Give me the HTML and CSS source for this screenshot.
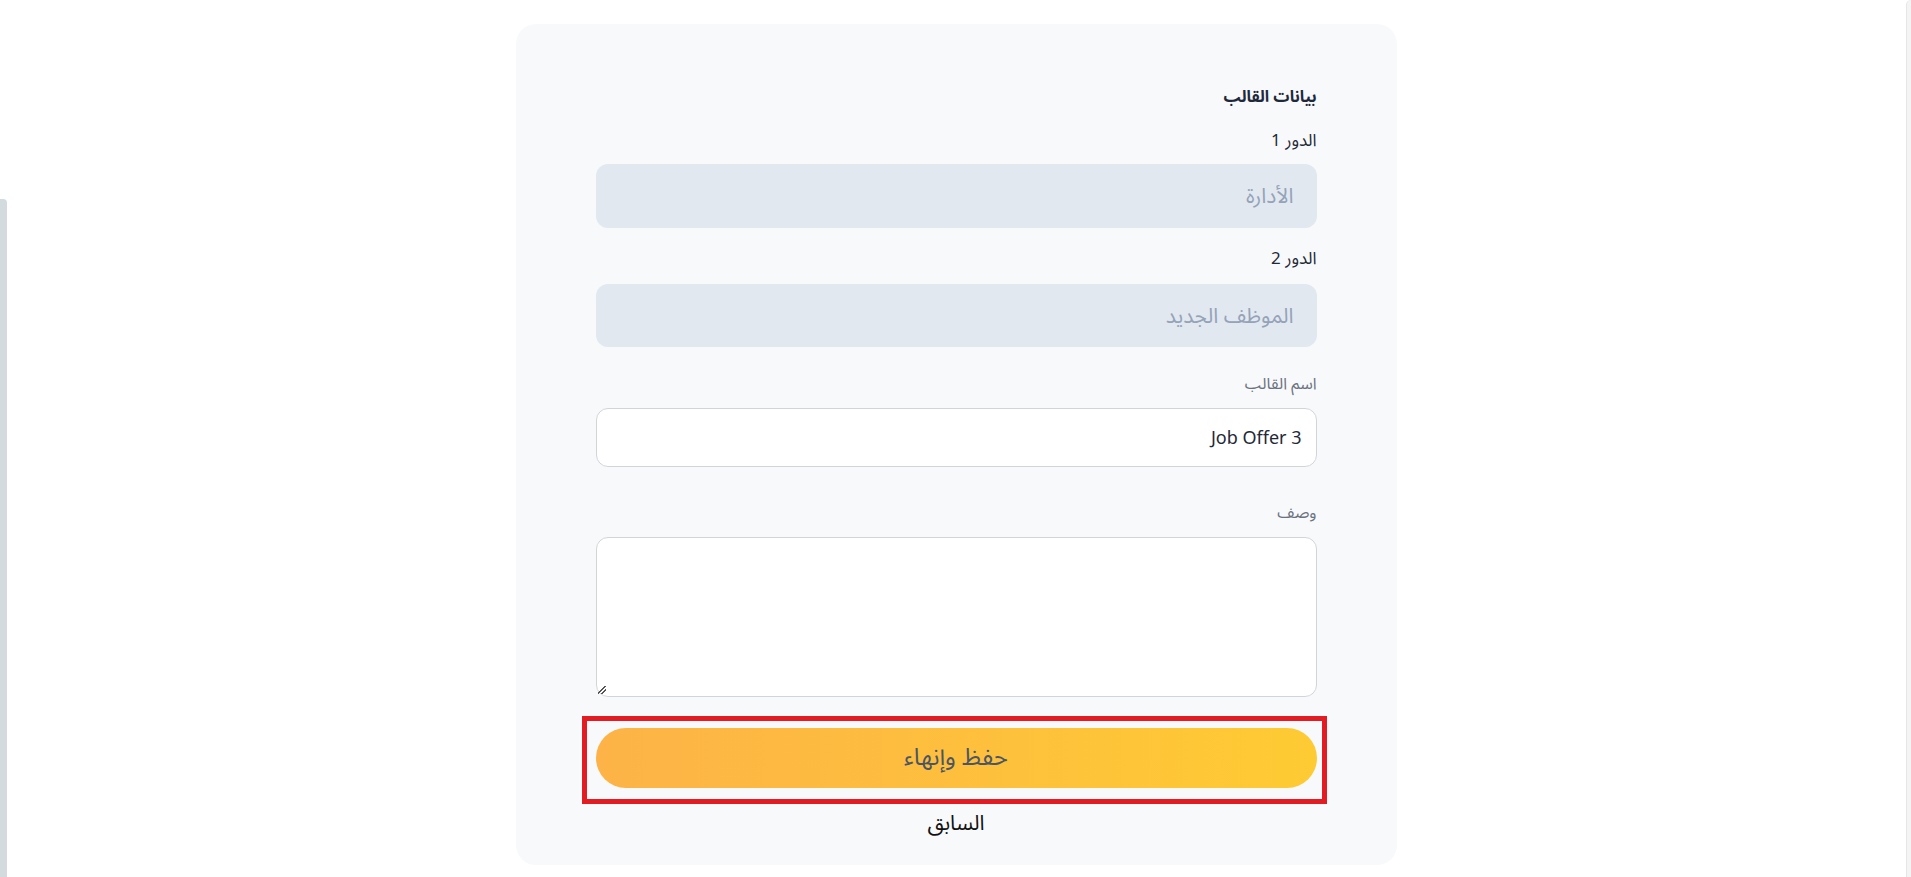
FILE: index.html
```html
<!DOCTYPE html>
<html lang="ar" dir="rtl">
<head>
<meta charset="utf-8">
<title>بيانات القالب</title>
<link rel="stylesheet" href="styles.css">
</head>
<body>
<div class="page">
  <div class="side-bar"></div>
  <main class="main">
    <section class="card">
      <h2 class="title">بيانات القالب</h2>

      <label class="label label-strong">الدور 1</label>
      <div class="field field-disabled">الأدارة</div>

      <label class="label label-strong label-2">الدور 2</label>
      <div class="field field-disabled field-2">الموظف الجديد</div>

      <label class="label label-soft label-3">اسم القالب</label>
      <div class="field field-input">Job Offer 3</div>

      <label class="label label-soft label-4">وصف</label>
      <div class="textarea"><span class="grip"></span></div>

      <div class="btn-wrap">
        <button class="btn-primary" type="button">حفظ وإنهاء</button>
        <span class="highlight"></span>
      </div>

      <button class="btn-link" type="button">السابق</button>
    </section>
  </main>
  <div class="right-edge"></div>
</div>
</body>
</html>
```

FILE: styles.css
```css
* { box-sizing: border-box; }

html, body {
  margin: 0;
  padding: 0;
  background: #ffffff;
  height: 877px;
  overflow: hidden;
}

body {
  font-family: "Noto Sans Arabic", "DejaVu Sans", "Noto Sans", sans-serif;
  color: #1f2937;
}

.page {
  display: flex;
  flex-direction: row-reverse;
  height: 877px;
}

.side-bar {
  width: 7px;
  margin-top: 199px;
  background: #d3dbdf;
  border-top-right-radius: 4px;
  flex: none;
}

.right-edge {
  width: 5px;
  flex: none;
  background: #f4f4f5;
  border-left: 1px solid #e6e6e8;
  border-top-left-radius: 8px;
}

.main {
  flex: 1;
  display: flex;
  justify-content: center;
}

.card {
  width: 881px;
  height: 841px;
  margin-top: 24px;
  margin-right: 1px;
  background: #f8f9fb;
  border-radius: 20px;
  padding: 61px 80px 0 80px;
  display: flex;
  flex-direction: column;
  align-items: stretch;
}

.title {
  margin: 0;
  font-size: 16px;
  font-weight: 700;
  line-height: 24px;
  color: #1e293b;
}

.label {
  display: block;
  line-height: 24px;
  font-weight: 400;
}

.label-strong {
  font-size: 17px;
  color: #1f2937;
  margin-top: 20px;
  margin-bottom: 11px;
}

.label-2 {
  margin-top: 19px;
  margin-bottom: 13px;
}

.label-soft {
  font-size: 16px;
  color: #6b7280;
  line-height: 20px;
}

.label-3 {
  margin-top: 27px;
  margin-bottom: 14px;
}

.label-4 {
  margin-top: 36px;
  margin-bottom: 14px;
}

.field {
  display: flex;
  align-items: center;
  border-radius: 12px;
}

.field-disabled {
  height: 64px;
  background: #e2e8f0;
  color: #94a3b8;
  font-size: 21px;
  padding-right: 23px;
}

.field-2 {
  height: 63px;
}

.field-input {
  height: 59px;
  background: #ffffff;
  border: 1px solid #d1d5db;
  color: #1f2937;
  font-size: 18px;
  padding-right: 14px;
}

.textarea {
  position: relative;
  height: 160px;
  background: #ffffff;
  border: 1px solid #d1d5db;
  border-radius: 12px;
}

.grip {
  position: absolute;
  left: 1px;
  bottom: 2px;
  width: 8px;
  height: 8px;
  background: linear-gradient(135deg, transparent 40%, #555 40%, #555 52%, transparent 52%, transparent 68%, #555 68%, #555 80%, transparent 80%);
}

.btn-wrap {
  position: relative;
  margin-top: 31px;
}

.btn-primary {
  display: block;
  width: 100%;
  height: 60px;
  border: none;
  border-radius: 30px;
  background: linear-gradient(to right, #fdb347, #fecb33);
  color: #4b5563;
  font-family: inherit;
  font-size: 24px;
  line-height: 30px;
  cursor: pointer;
}

.highlight {
  position: absolute;
  top: -12px;
  bottom: -16px;
  left: -14px;
  right: -10px;
  border: 5px solid #e31b23;
  pointer-events: none;
}

.btn-link {
  align-self: center;
  margin-top: 23px;
  background: none;
  border: none;
  padding: 0;
  font-family: inherit;
  font-size: 21px;
  line-height: 24px;
  color: #111111;
  cursor: pointer;
}
```
